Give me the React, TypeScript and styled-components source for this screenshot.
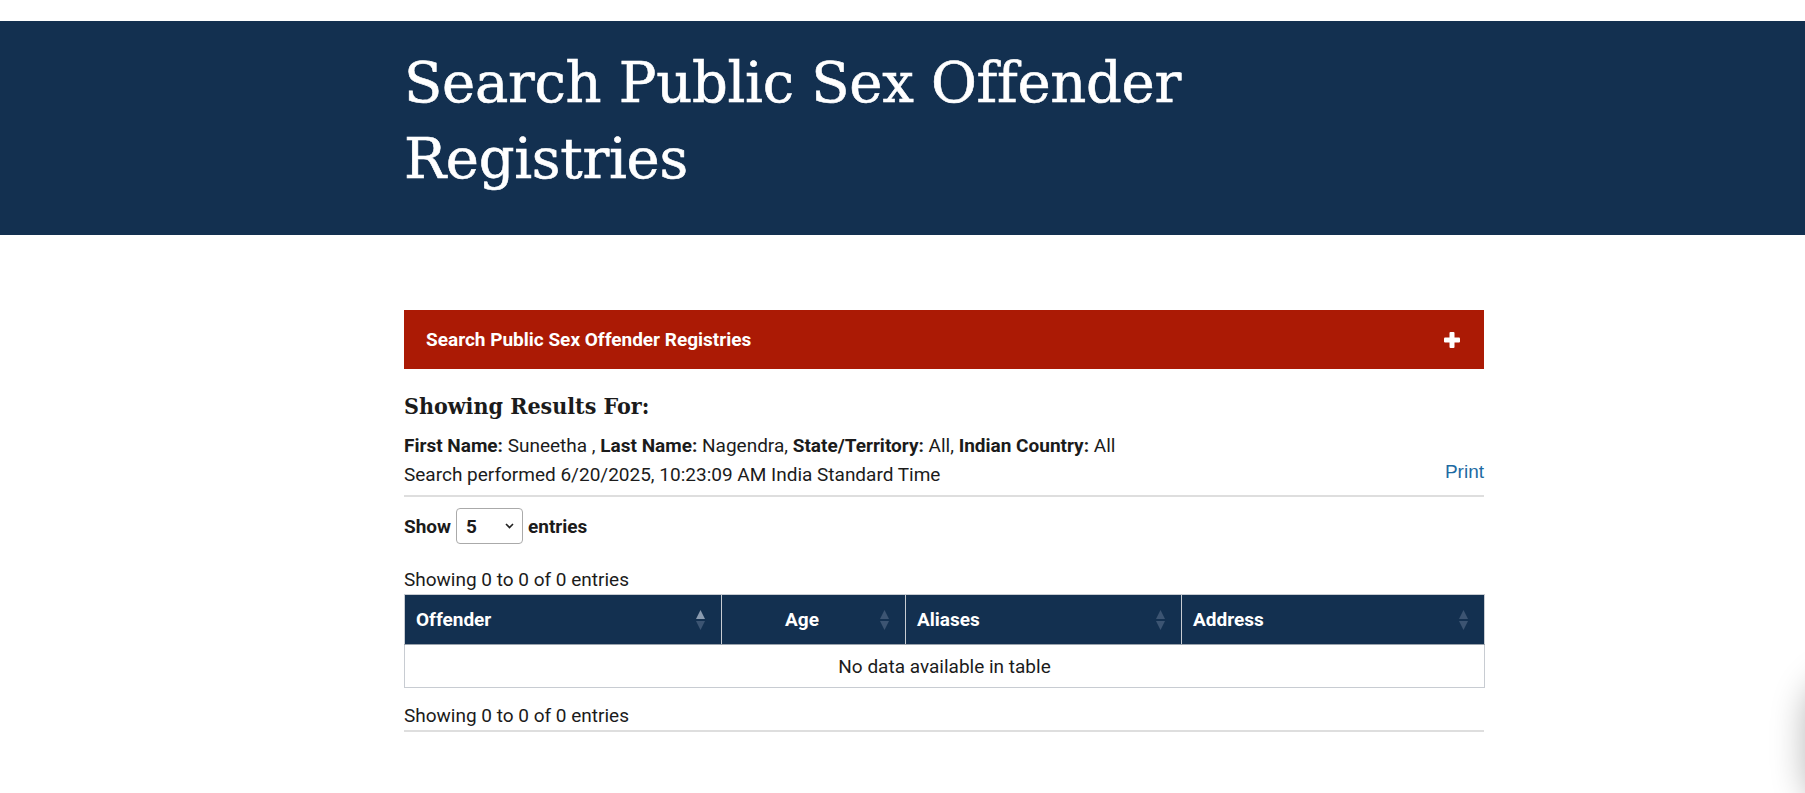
import styled, { createGlobalStyle } from "styled-components"

const GlobalStyle = createGlobalStyle`
    body{
        margin:0;
        font-family:Roboto, "Liberation Sans", sans-serif;
        color:#1b1b1b;
        background:#fff;
        overflow:hidden;
    }
    *{ box-sizing:border-box; }
`

const Page = styled.div`
    padding-top:21px;
    min-height:793px;
`
const Banner = styled.header`
    background-color:#133050;
    height:214px;
    padding:24px 0 0 404px;
`
const Title = styled.h1`
    margin:0;
    max-width:900px;
    font-family:"DejaVu Serif", "Liberation Serif", serif;
    font-weight:400;
    font-size:56px;
    line-height:76px;
    color:#fff;
    letter-spacing:-0.3px;
    -webkit-text-stroke:0.6px #fff;
`
const Main = styled.main`
    margin-left:404px;
    width:1080px;
    padding-top:75px;
`
const AccordionBar = styled.div`
    height:59px;
    background-color:#ab1a05;
    color:#fff;
    display:flex;
    justify-content:space-between;
    align-items:center;
    padding:0 24px 0 22px;
    font-weight:700;
    font-size:19px;
`
const ResultsTitle = styled.h2`
    margin:22px 0 0;
    font-family:"DejaVu Serif Condensed", "DejaVu Serif", "Liberation Serif", serif;
    font-stretch:semi-condensed;
    font-weight:700;
    font-size:23px;
    line-height:30px;
    color:#1b1b1b;
`
const Criteria = styled.p`
    margin:10px 0 0;
    font-size:19px;
    line-height:29px;
    b{ font-weight:700; }
`
const PerformedRow = styled.div`
    display:flex;
    justify-content:space-between;
    align-items:flex-start;
    font-size:19px;
    line-height:29px;
`
const PrintLink = styled.a`
    font-family:"Liberation Sans", Arial, sans-serif;
    font-size:19px;
    color:#1d6aa3;
    text-decoration:none;
    line-height:20px;
    margin-top:2px;
`
const Divider = styled.div<{ $top: number }>`
    height:2px;
    background-color:#dedede;
    margin-top:${p => p.$top}px;
`
const LengthRow = styled.label`
    display:flex;
    align-items:center;
    gap:5px;
    margin-top:11px;
    font-weight:700;
    font-size:19px;
`
const SelectBox = styled.div`
    width:67px;
    height:36px;
    border:1px solid #aaa;
    border-radius:4px;
    display:flex;
    align-items:center;
    justify-content:space-between;
    padding:0 8px 0 9px;
    font-size:19px;
    font-weight:700;
    background:#fff;
`
const Info = styled.div<{ $top: number }>`
    font-size:19px;
    line-height:24px;
    margin-top:${p => p.$top}px;
`
const Table = styled.table`
    width:1080px;
    border-collapse:collapse;
    margin-top:2px;
    table-layout:fixed;
`
const HeadCell = styled.th<{ $center?: boolean }>`
    background-color:#133050;
    color:#fff;
    font-weight:700;
    font-size:19px;
    height:50px;
    padding:0 34px 0 11px;
    text-align:${p => (p.$center ? "center" : "left")};
    border:1px solid #c8ccd2;
    border-bottom-color:#9aa3ad;
    position:relative;
`
const SortIcon = styled.svg`
    position:absolute;
    right:15px;
    top:50%;
    transform:translateY(-50%);
`
const EmptyCell = styled.td`
    height:43px;
    text-align:center;
    font-size:19px;
    border:1px solid #c8ccd2;
    border-top:none;
`
const Shadow = styled.div`
    position:fixed;
    right:-90px;
    bottom:-20px;
    width:90px;
    height:140px;
    border-radius:45px;
    background:#fff;
    box-shadow:0 0 34px rgba(0,0,0,0.28);
`

function Sort({ active }: { active?: boolean }) {
    return (
        <SortIcon width="11" height="22" viewBox="0 0 11 22">
            <path d="M5.5 1 L10 10 L1 10 Z" fill={active ? "#8a9bb0" : "#3c5472"} />
            <path d="M5.5 21 L10 12 L1 12 Z" fill="#3c5472" />
        </SortIcon>
    )
}

export default function App() {
    return (
        <>
            <GlobalStyle />
            <Page>
                <Banner>
                    <Title>Search Public Sex Offender Registries</Title>
                </Banner>
                <Main>
                    <AccordionBar>
                        <span>Search Public Sex Offender Registries</span>
                        <svg width="16" height="16" viewBox="0 0 16 16">
                            <rect x="5.5" y="0" width="5" height="16" rx="1" fill="#fff" />
                            <rect x="0" y="5.5" width="16" height="5" rx="1" fill="#fff" />
                        </svg>
                    </AccordionBar>
                    <ResultsTitle>Showing Results For:</ResultsTitle>
                    <Criteria>
                        <b>First Name:</b> Suneetha , <b>Last Name:</b> Nagendra, <b>State/Territory:</b> All, <b>Indian Country:</b> All
                    </Criteria>
                    <PerformedRow>
                        <span>Search performed 6/20/2025, 10:23:09 AM India Standard Time</span>
                        <PrintLink href="#">Print</PrintLink>
                    </PerformedRow>
                    <Divider $top={6} />
                    <LengthRow>
                        Show
                        <SelectBox>
                            <span>5</span>
                            <svg width="9" height="6" viewBox="0 0 9 6">
                                <path d="M1 1 L4.5 4.5 L8 1" stroke="#222" strokeWidth="1.6" fill="none" />
                            </svg>
                        </SelectBox>
                        entries
                    </LengthRow>
                    <Info $top={24}>Showing 0 to 0 of 0 entries</Info>
                    <Table>
                        <colgroup>
                            <col style={{ width: 317 }} />
                            <col style={{ width: 184 }} />
                            <col style={{ width: 276 }} />
                            <col style={{ width: 303 }} />
                        </colgroup>
                        <thead>
                            <tr>
                                <HeadCell>Offender<Sort active /></HeadCell>
                                <HeadCell $center>Age<Sort /></HeadCell>
                                <HeadCell>Aliases<Sort /></HeadCell>
                                <HeadCell>Address<Sort /></HeadCell>
                            </tr>
                        </thead>
                        <tbody>
                            <tr>
                                <EmptyCell colSpan={4}>No data available in table</EmptyCell>
                            </tr>
                        </tbody>
                    </Table>
                    <Info $top={16}>Showing 0 to 0 of 0 entries</Info>
                    <Divider $top={2} />
                </Main>
                <Shadow />
            </Page>
        </>
    )
}
